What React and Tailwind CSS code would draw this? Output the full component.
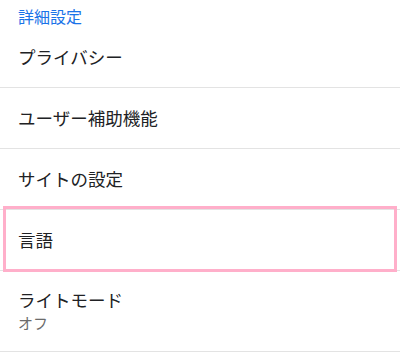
import React from "react";

const rows = [
  { title: "プライバシー" },
  { title: "ユーザー補助機能" },
  { title: "サイトの設定" },
  { title: "言語", focused: true },
  { title: "ライトモード", sub: "オフ" },
];

export default function App() {
  return (
    <div
      className="min-h-screen bg-white text-[#202124]"
      style={{ fontFamily: '"Noto Sans CJK JP", "Noto Sans", sans-serif' }}
    >
      {/* Section header */}
      <div className="h-[27px] pt-[5px] px-[18px] text-[16px] leading-[22px] text-[#1a73e8]">
        詳細設定
      </div>

      {/* Settings list */}
      <ul>
        {rows.map((row) => (
          <li
            key={row.title}
            className={
              "relative flex flex-col justify-center px-[18px] border-b border-[#e3e3e3] " +
              (row.sub ? "h-[81px]" : "h-[61px]")
            }
          >
            <span className="text-[17.5px] leading-[24px]">{row.title}</span>
            {row.sub && (
              <span className="text-[15px] leading-[22px] text-[#6b6b6b]">{row.sub}</span>
            )}
            {row.focused && (
              <div className="absolute top-[-4px] bottom-[-2px] left-[3px] right-[3px] border-[3px] border-[#ffafca]" />
            )}
          </li>
        ))}
      </ul>
    </div>
  );
}
